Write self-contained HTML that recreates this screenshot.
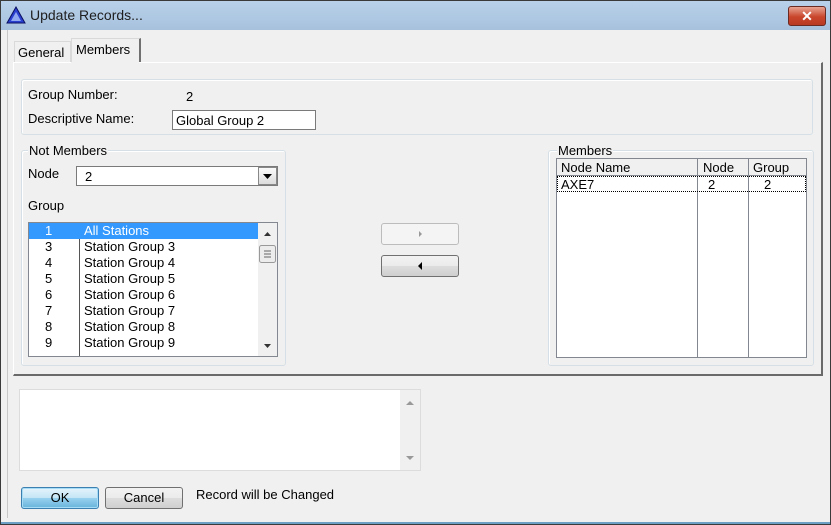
<!DOCTYPE html>
<html><head><style>
*{box-sizing:border-box}
body{margin:0;width:831px;height:525px;overflow:hidden;font-family:"Liberation Sans",sans-serif;font-size:13px;color:#000;background:#f0f0f0;position:relative}
.a{position:absolute}
.t{position:absolute;white-space:nowrap}
.gb{position:absolute;border:1px solid #d5dfe5;border-radius:3px;box-shadow:inset 1px 1px 0 #fff}
.btn{position:absolute;border:1px solid #707070;border-radius:3px;background:linear-gradient(#f2f2f2 0,#ebebeb 50%,#dddddd 51%,#cfcfcf 100%);text-align:center;line-height:19px}
.row{position:absolute;left:0;height:16px;line-height:16px;width:229px}
</style></head><body>
<div class="a" style="left:0;top:0;width:831px;height:525px;border:1px solid #3a3a3a;background:#f0f0f0"></div>
<div class="a" style="left:1px;top:1px;width:829px;height:29px;background:linear-gradient(#b9d1ea,#a7c1dd)"></div>
<div class="a" style="left:1px;top:522px;width:829px;height:2px;background:#6d9ec4"></div>
<div class="a" style="left:7px;top:30px;width:1px;height:488px;background:#c8c8c8"></div>
<svg class="a" style="left:6px;top:6px" width="20" height="18"><polygon points="10,1 19,17 1,17" fill="#2a3fcf" stroke="#0a1060"/><polygon points="10,6 15,15 5,15" fill="#8fa8f0"/></svg>
<div class="t" style="left:30px;top:7px;font-size:14px;color:#1e1e1e">Update Records...</div>
<div class="a" style="left:788px;top:6px;width:38px;height:20px;border:1px solid #6b2a22;border-radius:3px;background:linear-gradient(#e8a493,#c9462c 55%,#b83a22);color:#fff;text-align:center;font-weight:bold;font-size:14px;line-height:18px">✕</div>
<!-- tabs -->
<div class="a" style="left:14px;top:41px;width:57px;height:22px;border:1px solid #d9d9d9;border-bottom:none;background:#f0f0f0"></div>
<div class="t" style="left:18px;top:45px">General</div>
<div class="a" style="left:71px;top:38px;width:70px;height:25px;border:1px solid #d9d9d9;border-right:2px solid #707070;border-bottom:none;background:#f0f0f0"></div>
<div class="t" style="left:76px;top:42px">Members</div>
<div class="a" style="left:13px;top:62px;width:810px;height:314px;border-top:1px solid #fff;border-left:1px solid #fff;border-right:2px solid #6a6a6a;border-bottom:2px solid #6a6a6a"></div>
<div class="a" style="left:71px;top:62px;width:68px;height:2px;background:#f0f0f0"></div>
<div class="gb" style="left:21px;top:79px;width:792px;height:56px"></div>
<div class="t" style="left:28px;top:87px">Group Number:</div>
<div class="t" style="left:186px;top:89px">2</div>
<div class="t" style="left:28px;top:111px">Descriptive Name:</div>
<div class="a" style="left:172px;top:110px;width:144px;height:20px;border:1px solid #7a7a7a;background:#fff;padding:2px 0 0 3px">Global Group 2</div>
<div class="gb" style="left:21px;top:150px;width:265px;height:216px"></div>
<div class="t" style="left:28px;top:143px;background:#f0f0f0;padding:0 1px">Not Members</div>
<div class="t" style="left:28px;top:166px">Node</div>
<div class="a" style="left:76px;top:166px;width:202px;height:20px;border:1px solid #7a7a7a;background:#fff;padding:2px 0 0 8px">2</div>
<div class="a" style="left:258px;top:167px;width:19px;height:18px;border:1px solid #888;background:linear-gradient(#fafafa,#dcdcdc)"><svg width="17" height="16"><polygon points="4,6 13,6 8.5,11" fill="#000"/></svg></div>
<div class="t" style="left:28px;top:198px">Group</div>
<div class="a" style="left:28px;top:222px;width:250px;height:135px;border:1px solid #828790;background:#fff;overflow:hidden">
 <div class="a" style="left:50px;top:0;width:1px;height:134px;background:#555"></div>
 <div class="row" style="top:0;background:#3399ff;color:#fff"></div>
 <div class="t" style="left:16px;top:0;color:#fff">1</div><div class="t" style="left:55px;top:0;color:#fff">All Stations</div>
 <div class="t" style="left:16px;top:16px">3</div><div class="t" style="left:55px;top:16px">Station Group 3</div>
 <div class="t" style="left:16px;top:32px">4</div><div class="t" style="left:55px;top:32px">Station Group 4</div>
 <div class="t" style="left:16px;top:48px">5</div><div class="t" style="left:55px;top:48px">Station Group 5</div>
 <div class="t" style="left:16px;top:64px">6</div><div class="t" style="left:55px;top:64px">Station Group 6</div>
 <div class="t" style="left:16px;top:80px">7</div><div class="t" style="left:55px;top:80px">Station Group 7</div>
 <div class="t" style="left:16px;top:96px">8</div><div class="t" style="left:55px;top:96px">Station Group 8</div>
 <div class="t" style="left:16px;top:112px">9</div><div class="t" style="left:55px;top:112px">Station Group 9</div>
 <div class="a" style="left:229px;top:0;width:19px;height:133px;background:#f0f0f0"></div>
 <svg class="a" style="left:229px;top:0" width="19" height="133"><polygon points="6,13 13,13 9.5,9" fill="#333"/><rect x="1.5" y="22.5" width="16" height="17" rx="2" fill="#ececec" stroke="#999"/><path d="M6 28h7M6 31h7M6 34h7" stroke="#666"/><polygon points="6,121 13,121 9.5,125" fill="#333"/></svg>
</div>
<div class="a" style="left:381px;top:223px;width:78px;height:22px;border:1px solid #bcbcbc;border-radius:3px;background:#f4f4f4"><svg width="76" height="20"><polygon points="37,7 37,13 40,10" fill="#999"/></svg></div>
<div class="btn" style="left:381px;top:255px;width:78px;height:22px"><svg width="76" height="20" style="display:block"><polygon points="40,6 40,14 36,10" fill="#000"/></svg></div>
<div class="gb" style="left:548px;top:150px;width:266px;height:216px"></div>
<div class="t" style="left:557px;top:143px;background:#f0f0f0;padding:0 1px">Members</div>
<div class="a" style="left:556px;top:158px;width:251px;height:200px;border:1px solid #828790;background:#fff">
 <div class="a" style="left:0;top:0;width:249px;height:17px;border-bottom:1px solid #828790;background:#f0f0f0"></div>
 <div class="a" style="left:140px;top:0;width:1px;height:198px;background:#828790"></div>
 <div class="a" style="left:191px;top:0;width:1px;height:198px;background:#828790"></div>
 <div class="t" style="left:4px;top:1px">Node Name</div>
 <div class="t" style="left:146px;top:1px">Node</div>
 <div class="t" style="left:196px;top:1px">Group</div>
 <div class="a" style="left:0;top:17px;width:249px;height:16px;border:1px dotted #000"></div>
 <div class="t" style="left:4px;top:18px">AXE7</div>
 <div class="t" style="left:151px;top:18px">2</div>
 <div class="t" style="left:207px;top:18px">2</div>
</div>
<div class="a" style="left:19px;top:389px;width:402px;height:82px;border:1px solid #dcdcdc;background:#fff"></div>
<div class="a" style="left:400px;top:390px;width:20px;height:80px;background:#f0f0f0"></div>
<svg class="a" style="left:400px;top:390px" width="20" height="80"><polygon points="6,15 14,15 10,11" fill="#999"/><polygon points="6,66 14,66 10,70" fill="#999"/></svg>
<div class="btn" style="left:21px;top:487px;width:78px;height:22px;border-color:#3c7fb1;background:linear-gradient(#e5f4fc,#c4e5f6 50%,#98d1ef 51%,#68b3db);box-shadow:inset 0 0 0 1px #a6dcf5">OK</div>
<div class="btn" style="left:105px;top:487px;width:78px;height:22px">Cancel</div>
<div class="t" style="left:196px;top:487px">Record will be Changed</div>
</body></html>
